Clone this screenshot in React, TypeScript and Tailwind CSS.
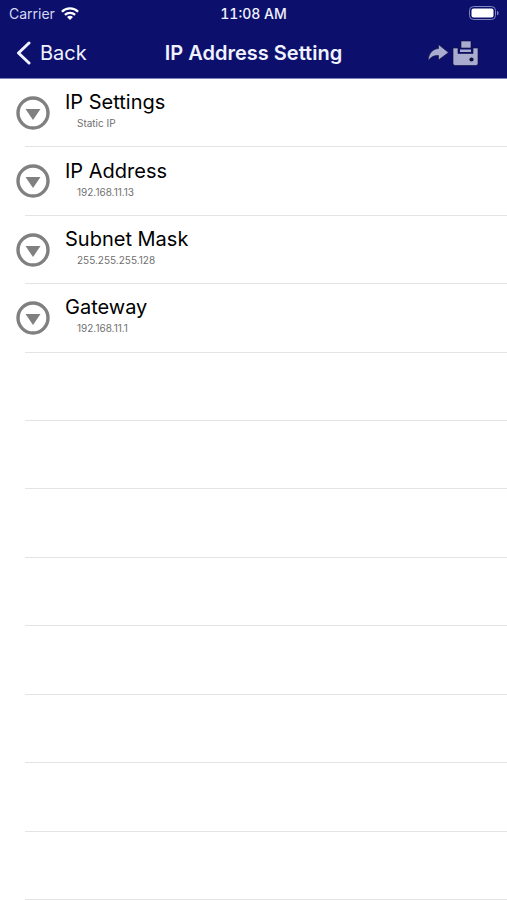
const settings = [
  { title: 'IP Settings', value: 'Static IP' },
  { title: 'IP Address', value: '192.168.11.13' },
  { title: 'Subnet Mask', value: '255.255.255.128' },
  { title: 'Gateway', value: '192.168.11.1' },
]

const emptyRows = Array.from({ length: 8 }, (_, i) => i)

// inset separator under every row
const rowClass = 'flex flex-col after:block after:h-px after:ml-[25px] after:bg-[#e4e4e4]'

function WifiIcon() {
  return (
    <svg viewBox="0 0 18 13" className="w-[18px] h-[13px]" fill="none" stroke="currentColor" strokeWidth="2.3" aria-hidden="true">
      <path d="M0.9 4.7a11.6 11.6 0 0 1 16.2 0" />
      <path d="M3.9 7.9a7.3 7.3 0 0 1 10.2 0" />
      <path d="M9 13 6 10.1a4.3 4.3 0 0 1 6 0z" fill="currentColor" stroke="none" />
    </svg>
  )
}

function BatteryIcon() {
  return (
    <svg viewBox="0 0 30 14" className="w-[30px] h-[14px]" aria-hidden="true">
      <rect x="0.5" y="0.5" width="26" height="13" rx="4" fill="none" stroke="#8286bd" />
      <rect x="2.5" y="2.5" width="22" height="9" rx="2" fill="#fff" />
      <path d="M28 4.7v4.6c1-.4 1.6-1.3 1.6-2.3S29 5.1 28 4.7z" fill="#8286bd" />
    </svg>
  )
}

function SendToPrinterIcon() {
  return (
    <svg viewBox="0 0 52 26" className="w-[52px] h-[26px]" aria-hidden="true">
      <g fill="#a9abcf" stroke="#0a0c3a" strokeWidth="0.6">
        <path d="M1 20.500C2 12.500 6 9 11.500 8.500V4.500L21.500 12.500 11.500 20v-4.500C7 15.200 4 17 1 20.500z" />
        <path d="M26 8h5v5.500h15V8h5v15.500q0 2-2 2H28q-2 0-2-2z" />
        <rect x="34" y="1" width="10" height="7" />
      </g>
      <rect x="33" y="9.500" width="11" height="2.500" fill="#a9abcf" />
      <circle cx="44.500" cy="19.500" r="2.100" fill="#0a0c3a" />
    </svg>
  )
}

function DropdownIcon() {
  return (
    <svg viewBox="0 0 34 34" className="w-[34px] h-[34px] shrink-0" aria-hidden="true">
      <circle cx="17" cy="17" r="15" fill="none" stroke="#808080" strokeWidth="3.4" />
      <path d="M9.500 13h15L17 24z" fill="#808080" />
    </svg>
  )
}

export default function App() {
  return (
    <div className="min-h-screen flex flex-col bg-white text-black font-['Inter',sans-serif]">
      <header className="bg-[#0c106c] text-[#f0f2ff] border-b border-[#7c82c0]">
        <div className="grid grid-cols-3 items-center h-7 px-2 pb-0.5 text-[14px]">
          <div className="flex items-center gap-[6px] pl-px text-[#d5d8f2]">
            <span>Carrier</span>
            <span className="text-white">
              <WifiIcon />
            </span>
          </div>
          <span className="text-center font-medium tabular-nums">11:08 AM</span>
          <div className="flex justify-end">
            <BatteryIcon />
          </div>
        </div>

        <nav className="grid grid-cols-[1fr_auto_1fr] items-center h-[50px] px-4">
          <button type="button" className="justify-self-start flex items-center gap-[9px] text-[20px]">
            <svg viewBox="0 0 15 24" className="w-[15px] h-6" fill="none" stroke="currentColor" strokeWidth="3" strokeLinecap="round" strokeLinejoin="round" aria-hidden="true">
              <path d="M13 2 2.500 12 13 22" />
            </svg>
            Back
          </button>
          <h1 className="text-[20px] font-semibold">IP Address Setting</h1>
          <button type="button" aria-label="Send to printer" className="justify-self-end mr-3">
            <SendToPrinterIcon />
          </button>
        </nav>
      </header>

      <ul className="flex-1 grid auto-rows-fr">
        {settings.map((item) => (
          <li key={item.title} className={rowClass}>
            <button type="button" className="flex-1 flex items-center text-left pl-4">
              <DropdownIcon />
              <span className="flex flex-col pl-[15px] pb-[7px]">
                <span className="text-[20px] leading-7">{item.title}</span>
                <span className="pl-3 text-[10px] leading-[14px] text-[#707070]">{item.value}</span>
              </span>
            </button>
          </li>
        ))}
        {emptyRows.map((row) => (
          <li key={row} className={`${rowClass} justify-end`} />
        ))}
      </ul>
    </div>
  )
}
